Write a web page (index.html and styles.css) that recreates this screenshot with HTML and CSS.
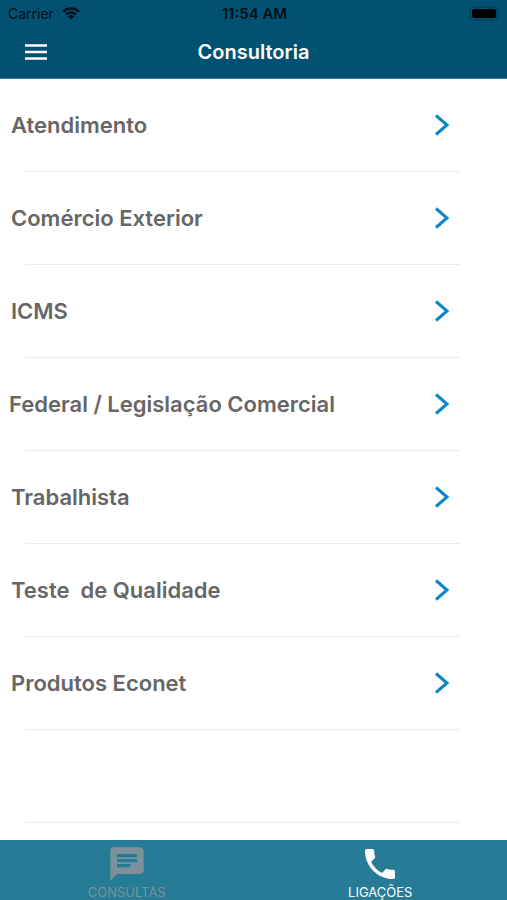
FILE: index.html
```html
<!DOCTYPE html>
<html lang="pt-BR">
<head>
<meta charset="utf-8">
<meta name="viewport" content="width=device-width, initial-scale=1">
<title>Consultoria</title>
<link rel="stylesheet" href="styles.css">
</head>
<body>
<header class="header">
  <div class="status">
    <div class="carrier">
      <span>Carrier</span>
      <svg class="wifi" viewBox="0 0 18 13" aria-hidden="true">
        <path d="M1.2 4.6a11.2 11.2 0 0 1 15.6 0M4 7.5a7.2 7.2 0 0 1 10 0" fill="none" stroke="currentColor" stroke-width="2.3"/>
        <path d="M9 12.6 6 9.5a4.3 4.3 0 0 1 6 0z" fill="currentColor"/>
      </svg>
    </div>
    <span class="time">11:54 AM</span>
    <svg class="battery" viewBox="0 0 32 15" aria-hidden="true">
      <rect x="1" y="1" width="27" height="13" rx="4" fill="none" stroke="#00405a" stroke-width="1.5"/>
      <path d="M30 5.500q2 2 0 4z" fill="#00405a"/>
      <rect x="3" y="3" width="24" height="9" rx="2" fill="#000"/>
    </svg>
  </div>
  <div class="titlebar">
    <button class="menu" type="button" aria-label="Menu">
      <svg viewBox="0 0 24 16" aria-hidden="true"><path d="M1 1.500h22M1 8h22M1 14.500h22" stroke="currentColor" stroke-width="2.6"/></svg>
    </button>
    <h1 class="title">Consultoria</h1>
  </div>
</header>
<main class="content">
  <ul class="list">
    <li class="item"><button class="row" type="button"><span>Atendimento</span><svg class="chevron" viewBox="0 0 16 24" aria-hidden="true"><path d="M2 2.500 13 12 2 21.500"/></svg></button></li>
    <li class="item"><button class="row" type="button"><span>Comércio Exterior</span><svg class="chevron" viewBox="0 0 16 24" aria-hidden="true"><path d="M2 2.500 13 12 2 21.500"/></svg></button></li>
    <li class="item"><button class="row" type="button"><span>ICMS</span><svg class="chevron" viewBox="0 0 16 24" aria-hidden="true"><path d="M2 2.500 13 12 2 21.500"/></svg></button></li>
    <li class="item"><button class="row row-wide" type="button"><span>Federal / Legislação Comercial</span><svg class="chevron" viewBox="0 0 16 24" aria-hidden="true"><path d="M2 2.500 13 12 2 21.500"/></svg></button></li>
    <li class="item"><button class="row" type="button"><span>Trabalhista</span><svg class="chevron" viewBox="0 0 16 24" aria-hidden="true"><path d="M2 2.500 13 12 2 21.500"/></svg></button></li>
    <li class="item"><button class="row" type="button"><span>Teste  de Qualidade</span><svg class="chevron" viewBox="0 0 16 24" aria-hidden="true"><path d="M2 2.500 13 12 2 21.500"/></svg></button></li>
    <li class="item"><button class="row" type="button"><span>Produtos Econet</span><svg class="chevron" viewBox="0 0 16 24" aria-hidden="true"><path d="M2 2.500 13 12 2 21.500"/></svg></button></li>
    <li class="item"></li>
  </ul>
</main>
<nav class="tabs">
  <button class="tab" type="button">
    <svg class="tab-icon" viewBox="0 0 24 24" aria-hidden="true"><path fill="currentColor" d="M20 2H4c-1.100 0-1.990.9-1.990 2L2 22l4-4h14c1.100 0 2-.9 2-2V4c0-1.100-.9-2-2-2zM6 9h12v2H6V9zm8 5H6v-2h8v2zm4-6H6V6h12v2z"/></svg>
    <span>CONSULTAS</span>
  </button>
  <button class="tab tab-active" type="button" aria-current="page">
    <svg class="tab-icon" viewBox="0 0 24 24" aria-hidden="true"><path fill="currentColor" d="M6.620 10.790c1.440 2.830 3.760 5.140 6.590 6.590l2.200-2.200c.27-.27.67-.36 1.020-.24 1.120.37 2.330.57 3.570.57.550 0 1 .45 1 1V20c0 .55-.45 1-1 1-9.390 0-17-7.610-17-17 0-.55.45-1 1-1h3.500c.550 0 1 .45 1 1 0 1.250.2 2.450.57 3.570.11.350.03.740-.25 1.020l-2.200 2.200z"/></svg>
    <span>LIGAÇÕES</span>
  </button>
</nav>
</body>
</html>
```
FILE: styles.css
```css
* {
  box-sizing: border-box;
}

body {
  margin: 0;
  min-height: 100vh;
  display: flex;
  flex-direction: column;
  background: #fff;
  font-family: Inter, "Liberation Sans", sans-serif;
}

button {
  margin: 0;
  padding: 0;
  border: 0;
  background: none;
  font: inherit;
  color: inherit;
  cursor: pointer;
}

svg {
  display: block;
  flex: none;
}

.header {
  background: #005172;
  border-bottom: 1px solid #3c8098;
}

.status {
  display: grid;
  grid-template-columns: 1fr auto 1fr;
  align-items: center;
  height: 26px;
  padding: 0 6px 0 8px;
  font-size: 14px;
  color: #001018;
}

.carrier {
  display: flex;
  align-items: center;
  gap: 8px;
}

.wifi {
  width: 18px;
  height: 13px;
}

.time {
  font-size: 15px;
  font-weight: 600;
}

.battery {
  width: 32px;
  height: 15px;
  justify-self: end;
}

.titlebar {
  display: grid;
  grid-template-columns: 1fr auto 1fr;
  align-items: center;
  height: 52px;
  padding: 0 24px;
  color: #fff;
}

.menu {
  justify-self: start;
}

.menu svg {
  width: 24px;
  height: 16px;
}

.title {
  margin: 0;
  font-size: 20px;
  font-weight: 600;
}

.content {
  flex: 1;
}

.list {
  margin: 0;
  padding: 0;
  list-style: none;
}

.item {
  display: flex;
  height: 93px;
  padding: 0 47px 0 11px;
  background: linear-gradient(#ebebeb, #ebebeb) 25px 100% / calc(100% - 72px) 1px no-repeat;
}

.row {
  flex: 1;
  display: flex;
  align-items: center;
  justify-content: space-between;
  padding: 0 10px 2px 0;
  font-size: 22px;
  font-weight: 600;
  color: #666;
  text-align: left;
  white-space: pre;
}

.row-wide {
  margin-left: -2px;
}

.chevron {
  width: 16px;
  height: 24px;
  fill: none;
  stroke: #0c86c6;
  stroke-width: 3;
}

.tabs {
  position: sticky;
  bottom: 0;
  display: flex;
  height: 60px;
  background: #267b97;
}

.tab {
  flex: 1;
  display: flex;
  flex-direction: column;
  align-items: center;
  justify-content: flex-end;
  font-size: 13px;
  line-height: 16px;
  color: #7e919a;
}

.tab-active {
  color: #fff;
}

.tab-icon {
  width: 40px;
  height: 40px;
}
```
